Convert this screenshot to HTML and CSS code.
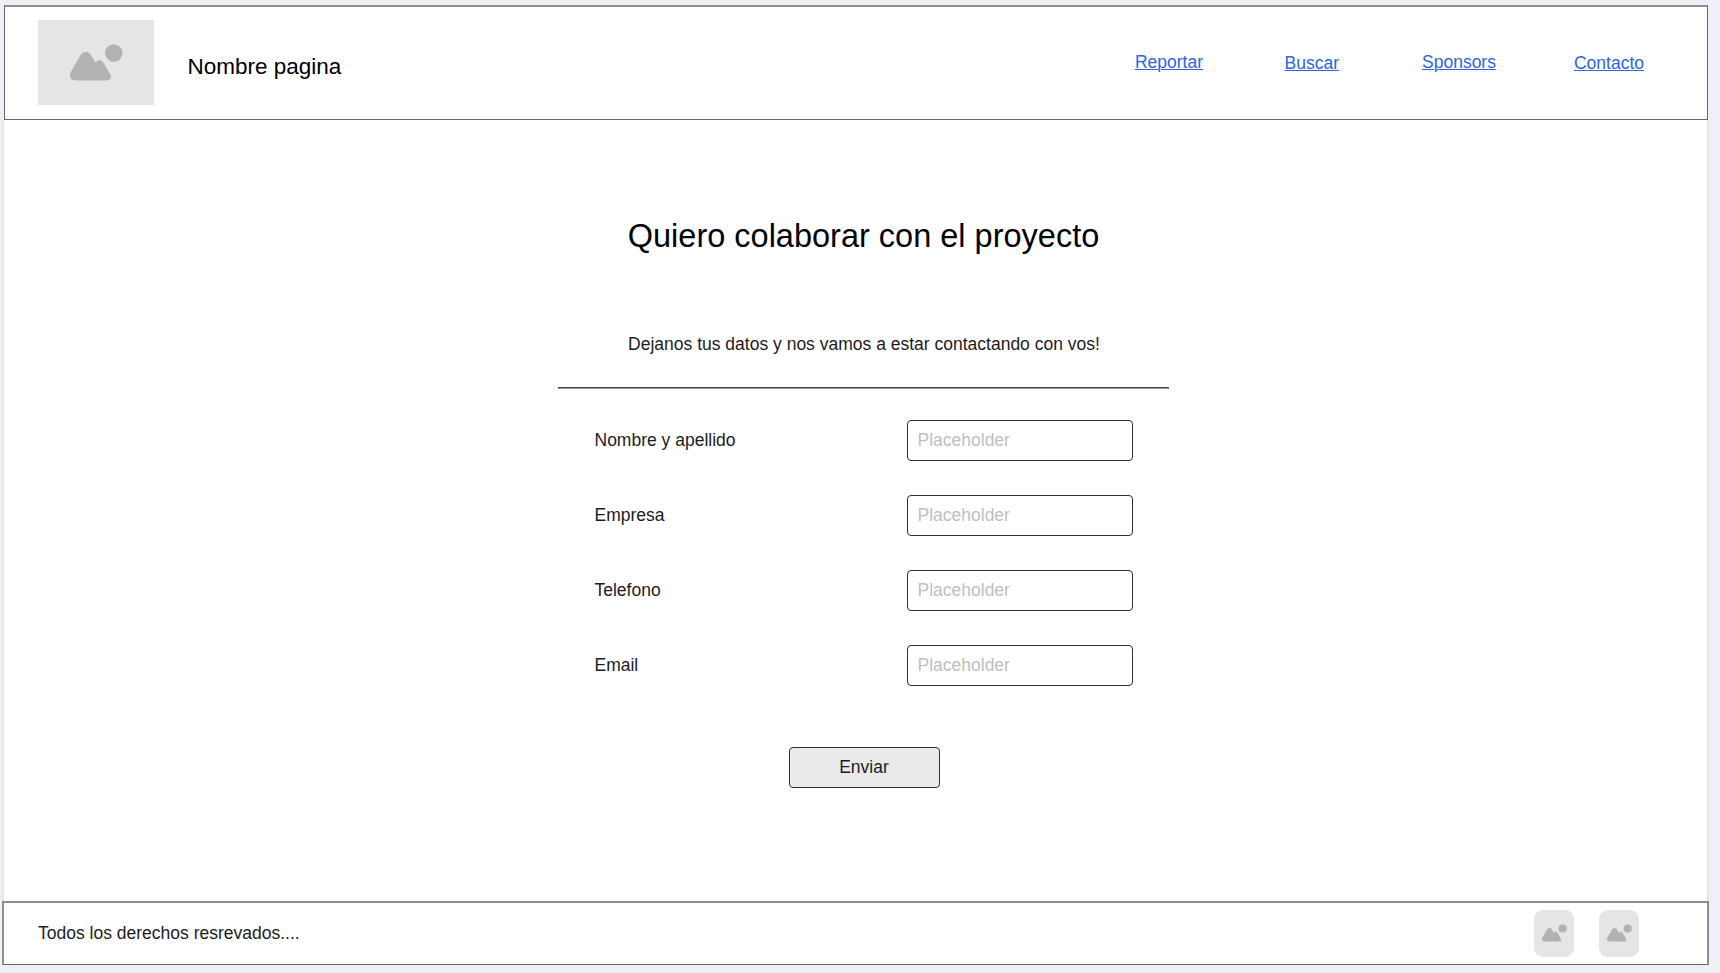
FILE: index.html
```html
<!DOCTYPE html>
<html lang="es">
<head>
<meta charset="utf-8">
<title>Nombre pagina</title>
<link rel="stylesheet" href="styles.css">
</head>
<body>
<svg class="symbols" width="0" height="0">
  <symbol id="picture" viewBox="0 0 53 37">
    <path d="M5.5 36.500H36.500Q43 36 40.300 30.500L33 18Q29.500 14 26 18.300L25.500 18.300L20.500 10.500Q16 5 11 10.500L1 27.500Q-2.500 35.500 5.500 36.500Z"/>
    <circle cx="43.800" cy="9" r="8.700"/>
  </symbol>
</svg>
<div class="page">
  <header class="header">
    <div class="logo"><svg class="logo-icon"><use href="#picture"/></svg></div>
    <span class="brand">Nombre pagina</span>
    <nav class="nav">
      <a class="link reportar" href="#">Reportar</a>
      <a class="link buscar" href="#">Buscar</a>
      <a class="link sponsors" href="#">Sponsors</a>
      <a class="link contacto" href="#">Contacto</a>
    </nav>
  </header>
  <main class="main">
    <h1 class="title">Quiero colaborar con el proyecto</h1>
    <p class="intro">Dejanos tus datos y nos vamos a estar contactando con vos!</p>
    <form class="form">
      <label class="row"><span class="label">Nombre y apellido</span><input class="field" type="text" placeholder="Placeholder"></label>
      <label class="row"><span class="label">Empresa</span><input class="field" type="text" placeholder="Placeholder"></label>
      <label class="row"><span class="label">Telefono</span><input class="field" type="text" placeholder="Placeholder"></label>
      <label class="row"><span class="label">Email</span><input class="field" type="text" placeholder="Placeholder"></label>
      <button class="submit" type="button">Enviar</button>
    </form>
  </main>
  <footer class="footer">
    <span>Todos los derechos resrevados....</span>
    <div class="social">
      <span class="badge"><svg class="badge-icon"><use href="#picture"/></svg></span>
      <span class="badge"><svg class="badge-icon"><use href="#picture"/></svg></span>
    </div>
  </footer>
</div>
</body>
</html>
```
FILE: styles.css
```css
* { box-sizing: border-box; }
body {
  margin: 0;
  height: 973px;
  overflow: hidden;
  padding: 5px 11px 0 2px;
  background: #eff0f5;
  color: #1c1c1e;
  font: 17.5px/20px "Liberation Sans", Arial, sans-serif;
}
.symbols { display: block; }
.page { display: flex; flex-direction: column; height: 960px; }
.header {
  display: flex;
  height: 115px;
  margin: 0 1px 0 2px;
  padding: 13px 63px 0 33px;
  background: #fff;
  border: 1px solid #666;
  border-top: 2px solid #8f8f93;
}
.logo {
  width: 116px;
  height: 85px;
  padding: 24px 0 0 32px;
  background: #e5e5e5;
}
.logo-icon { display: block; width: 53px; height: 37px; fill: #b2b2b2; }
.brand { margin: 34px 0 0 33.5px; font-size: 22.5px; line-height: 26px; color: #000; }
.nav { display: flex; margin-left: auto; padding-top: 32px; }
.link {
  color: #2a66dc;
  text-decoration-thickness: 1px;
  text-underline-offset: 1px;
}
.reportar { margin-right: 81.5px; }
.buscar { margin: 1px 83px 0 0; }
.sponsors { margin-right: 78px; }
.contacto { margin-top: 1px; }
.main {
  flex: 1;
  display: flex;
  flex-direction: column;
  align-items: center;
  padding: 98px 0 0 1px;
  background: #fff;
  border: 2px solid #e4e6ea;
  border-width: 0 2px;
}
.title { margin: 0; font-size: 32.5px; font-weight: 400; line-height: 36px; color: #000; padding-left: 15px; }
.intro { margin: 80px 0 33px; padding-left: 16px; }
.form {
  width: 611px;
  margin-left: 14px;
  border-top: 1px solid #444;
  box-shadow: inset 0 1px #999;
  padding: 32px 36px 0 37px;
  display: flex;
  flex-direction: column;
  align-items: center;
}
.row { display: flex; justify-content: space-between; align-items: center; width: 100%; margin-bottom: 34px; }
.label { padding-bottom: 2px; }
.field {
  width: 226px;
  height: 41px;
  padding: 0 10px;
  border: 1px solid #303032;
  border-radius: 4px;
  font: inherit;
  background: #fff;
}
.field::placeholder { color: #bfbfbf; opacity: 1; }
.submit {
  width: 151px;
  height: 41px;
  margin: 27px 0 0 1px;
  padding: 0 0 2px;
  border: 1px solid #303032;
  border-radius: 4px;
  background: #eaeaea;
  color: inherit;
  font: inherit;
}
.footer {
  display: flex;
  justify-content: space-between;
  height: 64px;
  padding: 20px 68px 0 34px;
  background: #fff;
  border: 2px solid #8f8f93;
  border-bottom: 1px solid #666;
}
.social { display: flex; gap: 25px; margin-top: -13px; }
.badge {
  width: 40px;
  height: 47px;
  padding: 14px 0 0 8px;
  background: #e5e5e5;
  border-radius: 9px;
}
.badge-icon { display: block; width: 25px; height: 18px; fill: #b2b2b2; }
```
